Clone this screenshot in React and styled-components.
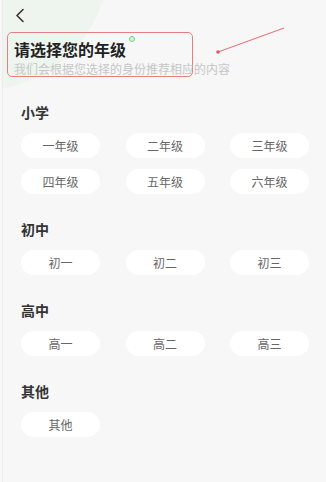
import React from "react";
import styled, { createGlobalStyle } from "styled-components";

const GlobalStyle = createGlobalStyle`
  html, body {
    margin: 0;
    padding: 0;
    background: #f7f7f7;
  }
  body {
    font-family: "Noto Sans CJK SC", "Noto Sans", sans-serif;
  }
`;

const Page = styled.div`
  position: relative;
  width: 324px;
  min-height: 482px;
  box-sizing: border-box;
  overflow: hidden;
  border-left: 1px solid #ececec;
  margin-left: 2px;
  background: radial-gradient(circle at -24px -40px, #eef5ee 0 130px, transparent 131px);
`;

const Header = styled.header`
  display: flex;
  flex-direction: column;
  padding: 7px 0 0 4px;
`;

const BackButton = styled.button`
  display: flex;
  align-items: center;
  width: 20px;
  height: 16px;
  padding: 0 0 0 8px;
  border: 0;
  background: none;
  color: #333;
  cursor: pointer;
`;

const TitleBox = styled.div`
  position: relative;
  width: 186px;
  height: 45px;
  box-sizing: border-box;
  margin-top: 9px;
  padding: 5px 0 0 6px;
  border: 1.5px solid #e58080;
  border-radius: 5px;
`;

const Title = styled.h1`
  margin: 0;
  font-size: 16px;
  line-height: 22px;
  font-weight: 700;
  color: #222;
`;

const Subtitle = styled.p`
  margin: 2px 0 0;
  font-size: 12px;
  line-height: 14px;
  color: #c6c6c6;
  white-space: nowrap;
`;

const Dot = styled.span`
  position: absolute;
  left: 121px;
  top: 3px;
  width: 4px;
  height: 4px;
  border-radius: 50%;
  border: 1px solid #7ccd7c;
  background: #d9f2d9;
`;

const Arrow = styled.svg`
  position: absolute;
  left: 208px;
  top: 20px;
`;

const Content = styled.main`
  display: flex;
  flex-direction: column;
  gap: 25px;
  padding: 25px 17px 0 18px;
`;

const Section = styled.section`
  display: flex;
  flex-direction: column;
`;

const SectionTitle = styled.h2`
  margin: 0 0 11px;
  font-size: 14px;
  line-height: 20px;
  font-weight: 700;
  color: #333;
`;

const Grid = styled.div`
  display: grid;
  grid-template-columns: repeat(3, 79px);
  justify-content: space-between;
  row-gap: 11px;
`;

const Pill = styled.button`
  height: 25px;
  padding: 0;
  border: 0;
  border-radius: 13px;
  background: #fff;
  font-family: inherit;
  font-size: 12px;
  color: #666;
  cursor: pointer;
`;

const groups = [
  { name: "小学", items: ["一年级", "二年级", "三年级", "四年级", "五年级", "六年级"] },
  { name: "初中", items: ["初一", "初二", "初三"] },
  { name: "高中", items: ["高一", "高二", "高三"] },
  { name: "其他", items: ["其他"] },
];

export default function App() {
  return (
    <>
      <GlobalStyle />
      <Page>
        <Header>
          <BackButton aria-label="返回">
            <svg width="10" height="15" viewBox="0 0 10 15">
              <path d="M8 1.5 L2 7.5 L8 13.5" fill="none" stroke="#333" strokeWidth="1.6" strokeLinecap="round" strokeLinejoin="round" />
            </svg>
          </BackButton>
          <TitleBox>
            <Title>请选择您的年级</Title>
            <Subtitle>我们会根据您选择的身份推荐相应的内容</Subtitle>
            <Dot />
          </TitleBox>
        </Header>
        <Arrow width="80" height="40" viewBox="0 0 80 40">
          <line x1="73" y1="8" x2="7" y2="32" stroke="#e67878" strokeWidth="1.2" />
          <circle cx="7" cy="32" r="1.8" fill="#e05a5a" />
        </Arrow>
        <Content>
          {groups.map((g) => (
            <Section key={g.name}>
              <SectionTitle>{g.name}</SectionTitle>
              <Grid>
                {g.items.map((it) => (
                  <Pill key={it}>{it}</Pill>
                ))}
              </Grid>
            </Section>
          ))}
        </Content>
      </Page>
    </>
  );
}
